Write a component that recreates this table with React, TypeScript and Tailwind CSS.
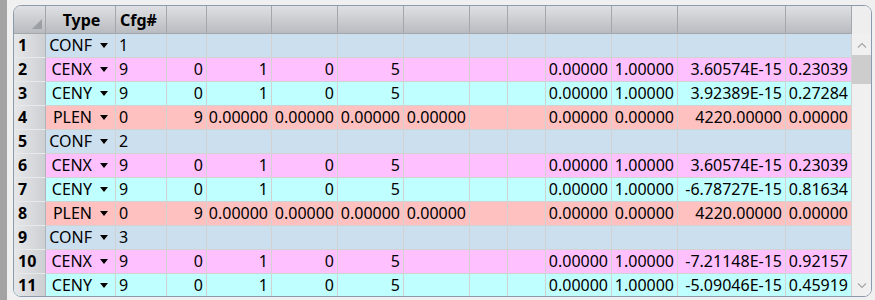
import React from "react";

type Row = { n: number; type: string; cells: string[] };

const widths = [40, 65, 66, 66, 66, 38, 38, 66, 66, 108, 66];
const wCls = [
  "w-[40px]",
  "w-[65px]",
  "w-[66px]",
  "w-[66px]",
  "w-[66px]",
  "w-[38px]",
  "w-[38px]",
  "w-[66px]",
  "w-[66px]",
  "w-[108px]",
  "w-[66px]",
];

const Z = "0.00000";
const cenx = (a: string, b: string) => ["0", "1", "0", "5", "", "", "", Z, "1.00000", a, b];
const plen = ["9", Z, Z, Z, Z, "", "", Z, Z, "4220.00000", Z];
const conf = ["", "", "", "", "", "", "", "", "", "", ""];

const rows: { n: number; type: string; cfg: string; cells: string[] }[] = [
  { n: 1, type: "CONF", cfg: "1", cells: conf },
  { n: 2, type: "CENX", cfg: "9", cells: cenx("3.60574E-15", "0.23039") },
  { n: 3, type: "CENY", cfg: "9", cells: cenx("3.92389E-15", "0.27284") },
  { n: 4, type: "PLEN", cfg: "0", cells: plen },
  { n: 5, type: "CONF", cfg: "2", cells: conf },
  { n: 6, type: "CENX", cfg: "9", cells: cenx("3.60574E-15", "0.23039") },
  { n: 7, type: "CENY", cfg: "9", cells: cenx("-6.78727E-15", "0.81634") },
  { n: 8, type: "PLEN", cfg: "0", cells: plen },
  { n: 9, type: "CONF", cfg: "3", cells: conf },
  { n: 10, type: "CENX", cfg: "9", cells: cenx("-7.21148E-15", "0.92157") },
  { n: 11, type: "CENY", cfg: "9", cells: cenx("-5.09046E-15", "0.45919") },
];

const bgFor: Record<string, string> = {
  CONF: "bg-[#cbdfee]",
  CENX: "bg-[#ffc0ff]",
  CENY: "bg-[#c0ffff]",
  PLEN: "bg-[#ffc0c0]",
};

function Caret() {
  return (
    <svg width="8" height="5" viewBox="0 0 8 5" className="ml-[8px] shrink-0">
      <path d="M0 0 L8 0 L4 5 Z" fill="#000" />
    </svg>
  );
}

function Chevron({ up }: { up: boolean }) {
  return (
    <svg width="10" height="6" viewBox="0 0 10 6">
      <path
        d={up ? "M1 5.5 L5 1.5 L9 5.5" : "M1 0.5 L5 4.5 L9 0.5"}
        stroke="#a6a6a6"
        strokeWidth="1.2"
        fill="none"
      />
    </svg>
  );
}

export default function App() {
  return (
    <div
      className="w-[875px] h-[300px] bg-[#f0f0f0] flex overflow-hidden text-black"
      style={{ fontFamily: '"Noto Sans", "Open Sans", sans-serif' }}
    >
      <div className="w-[7px] h-full bg-[#a3a3a3]" />
      <div className="pl-[6px] pt-[5px]">
        <div className="w-[859px] h-[292px] border border-[#8c9aab] rounded-[8px] overflow-hidden flex bg-white">
          <div className="w-[838px] flex flex-col">
            {/* header */}
            <div className="flex h-[28px] shrink-0 border-b border-[#a3a6ab] bg-gradient-to-b from-[#dfe0e3] to-[#b8bbc0]">
              <div className="w-[32px] h-full border-r border-[#a3a6ab] relative">
                <svg width="10" height="10" viewBox="0 0 10 10" className="absolute right-[3px] bottom-[4px]">
                  <path d="M10 0 L10 10 L0 10 Z" fill="#9c9fa4" />
                </svg>
              </div>
              <div className="w-[70px] h-full border-r border-[#a3a6ab] flex items-center justify-center font-bold text-[16px] pl-[2px]">
                Type
              </div>
              <div className="w-[51px] h-full border-r border-[#a3a6ab] flex items-center pl-[4px] font-bold text-[16px]">
                Cfg#
              </div>
              {widths.map((_, i) => (
                <div key={i} className={`${wCls[i]} h-full border-r border-[#a3a6ab]`} />
              ))}
            </div>
            {rows.map((r) => (
              <div key={r.n} className={`flex h-[24px] shrink-0 text-[16px] leading-[23px] ${bgFor[r.type]}`}>
                <div className="w-[32px] h-full border-r border-b border-r-[#b0b3b8] border-b-[#e8e9eb] bg-gradient-to-r from-[#e6e7e9] to-[#cdd0d3] pl-[4px] font-bold">
                  {r.n}
                </div>
                <div className="w-[70px] h-full border-r border-b border-[#d2d2d2] flex items-center justify-end pr-[7px]">
                  <span>{r.type}</span>
                  <Caret />
                </div>
                <div className="w-[51px] h-full border-r border-b border-[#d2d2d2] pl-[3px]">{r.cfg}</div>
                {r.cells.map((c, i) => (
                  <div
                    key={i}
                    className={`${wCls[i]} h-full border-r border-b border-[#d2d2d2] text-right pr-[3px] overflow-hidden whitespace-nowrap`}
                  >
                    {c}
                  </div>
                ))}
              </div>
            ))}
          </div>
          {/* scrollbar */}
          <div className="w-[19px] flex flex-col bg-[#f0f0f0]">
            <div className="h-[28px] shrink-0 bg-[#eeeeee]" />
            <div className="h-[21px] shrink-0 flex items-center justify-center">
              <Chevron up={true} />
            </div>
            <div className="h-[29px] shrink-0 bg-[#cdcdcd]" />
            <div className="flex-1" />
            <div className="h-[20px] shrink-0 flex items-center justify-center">
              <Chevron up={false} />
            </div>
          </div>
        </div>
      </div>
    </div>
  );
}
